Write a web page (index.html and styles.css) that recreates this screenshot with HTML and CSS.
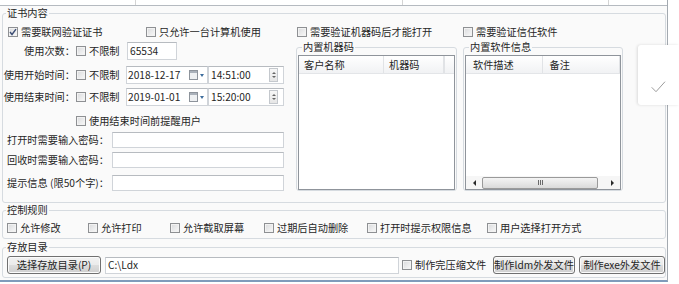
FILE: index.html
```html
<!DOCTYPE html>
<html>
<head>
<meta charset="utf-8">
<link rel="stylesheet" href="styles.css">
</head>
<body>
<div class="window">
  <div class="topbox"><span class="tc c1"></span><span class="tc c2"></span><span class="tc c3"></span><span class="tc c4"></span></div>

  <fieldset class="grp main">
    <legend>证书内容</legend>
    <div class="cols">
      <div class="left">
        <div class="row r1">
          <label class="cb w138"><span class="box on"><svg width="8" height="8" viewBox="0 0 8 8"><polyline points="1,4 3,6.5 7,1.2" fill="none" stroke="#3c4d74" stroke-width="1.4"/></svg></span>需要联网验证证书</label>
          <label class="cb"><span class="box"></span>只允许一台计算机使用</label>
        </div>
        <div class="row r2">
          <span class="lbl">使用次数：</span>
          <label class="cb nolim"><span class="box"></span>不限制</label>
          <span class="input num">65534</span>
        </div>
        <div class="row r3">
          <span class="lbl">使用开始时间：</span>
          <label class="cb nolim"><span class="box"></span>不限制</label>
          <span class="input date"><span>2018-12-17</span><span class="cal"></span><span class="dd"></span></span>
          <span class="input time"><span>14:51:00</span><span class="spin"><i class="up"></i><i class="dn"></i></span></span>
        </div>
        <div class="row r4">
          <span class="lbl">使用结束时间：</span>
          <label class="cb nolim"><span class="box"></span>不限制</label>
          <span class="input date"><span>2019-01-01</span><span class="cal"></span><span class="dd"></span></span>
          <span class="input time"><span>15:20:00</span><span class="spin"><i class="up"></i><i class="dn"></i></span></span>
        </div>
        <div class="row r5">
          <label class="cb"><span class="box"></span>使用结束时间前提醒用户</label>
        </div>
        <div class="row r6">
          <span class="plbl">打开时需要输入密码：</span><span class="input pw"></span>
        </div>
        <div class="row r7">
          <span class="plbl">回收时需要输入密码：</span><span class="input pw"></span>
        </div>
        <div class="row r8">
          <span class="plbl">提示信息 (限50个字)：</span><span class="input pw"></span>
        </div>
      </div>

      <div class="mid">
        <div class="row r1 pl1">
          <label class="cb"><span class="box"></span>需要验证机器码后才能打开</label>
        </div>
        <fieldset class="grp sub">
          <legend>内置机器码</legend>
          <div class="list">
            <div class="lhead"><span class="hc h1">客户名称</span><span class="hc h2">机器码</span><span class="hc"></span></div>
            <div class="lbody"></div>
          </div>
        </fieldset>
      </div>

      <div class="right">
        <div class="row r1">
          <label class="cb"><span class="box"></span>需要验证信任软件</label>
        </div>
        <fieldset class="grp sub">
          <legend>内置软件信息</legend>
          <div class="list">
            <div class="lhead"><span class="hc s1">软件描述</span><span class="hc s2">备注</span></div>
            <div class="lbody"></div>
            <div class="hscroll">
              <span class="sbtn"><i class="al"></i></span>
              <span class="thumb"><i></i><i></i><i></i></span>
              <span class="track"></span>
              <span class="sbtn"><i class="ar"></i></span>
            </div>
          </div>
        </fieldset>
      </div>
    </div>
  </fieldset>

  <fieldset class="grp ctl">
    <legend>控制规则</legend>
    <div class="ctlrow">
      <label class="cb c81"><span class="box"></span>允许修改</label>
      <label class="cb c82"><span class="box"></span>允许打印</label>
      <label class="cb c94"><span class="box"></span>允许截取屏幕</label>
      <label class="cb c103"><span class="box"></span>过期后自动删除</label>
      <label class="cb c120"><span class="box"></span>打开时提示权限信息</label>
      <label class="cb"><span class="box"></span>用户选择打开方式</label>
    </div>
  </fieldset>

  <fieldset class="grp dir">
    <legend>存放目录</legend>
    <div class="dirrow">
      <button class="btn b94">选择存放目录(P)</button>
      <span class="input path">C:\Ldx</span>
      <label class="cb c91"><span class="box"></span>制作完压缩文件</label>
      <button class="btn b82">制作ldm外发文件</button>
      <button class="btn b86">制作exe外发文件</button>
    </div>
  </fieldset>
</div>

<div class="toast">
  <svg width="41" height="60" viewBox="0 0 41 60"><polyline points="13.7,42.3 18,46.7 27,36.7" fill="none" stroke="#9c9c9c" stroke-width="1"/></svg>
</div>
</body>
</html>
```

FILE: styles.css
```css
body {
  margin: 0;
  width: 679px;
  height: 284px;
  overflow: hidden;
  position: relative;
  background: #ffffff;
  font-family: "Noto Sans CJK SC", "Liberation Sans", sans-serif;
  font-size: 10.2px;
  color: #262626;
}

.window {
  width: 668px;
  height: 282px;
  box-sizing: border-box;
  border-right: 1px solid #a3a9b0;
  border-bottom: 2px solid #7f9bbb;
  background: #fafafa;
}

.topbox {
  display: flex;
  height: 6px;
  box-sizing: border-box;
  background: #fff;
  border-bottom: 1px solid #b5bac0;
}
.tc { box-sizing: border-box; height: 5px; border-right: 1px solid #d4d4d4; }
.c1 { width: 136px; }
.c2 { width: 267px; }
.c3 { width: 206px; }
.c4 { flex: 1; border-right: none; }

.grp {
  margin: 0 0 0 2px;
  padding: 0;
  border: 1px solid #d6dbe0;
  border-radius: 3px;
  min-width: 0;
  box-sizing: border-box;
}
.grp > legend {
  padding: 0 1px;
  margin-left: 3px;
  height: 14px;
  line-height: 14px;
}

.main { width: 664px; padding-bottom: 11px; }

.cols { display: flex; }
.left { width: 293px; }
.mid { width: 161px; }
.right { width: 160px; margin-left: 6px; }

.row { display: flex; align-items: center; white-space: nowrap; }
.r1 { height: 14px; margin-top: 5px; }
.r2 { height: 18px; margin-top: 3px; }
.r3 { height: 18px; margin-top: 6px; }
.r4 { height: 18px; margin-top: 4px; }
.r5 { height: 14px; margin-top: 8px; padding-left: 73px; }
.r6 { height: 16px; margin-top: 4px; }
.r7 { height: 16px; margin-top: 4px; }
.r8 { height: 16px; margin-top: 7px; }
.left .r1 { padding-left: 5px; }
.pl1 { padding-left: 1px; }

.cb { display: flex; align-items: center; height: 14px; line-height: 14px; white-space: nowrap; }
.box {
  width: 10px;
  height: 10px;
  box-sizing: border-box;
  border: 1px solid #8e9093;
  background: linear-gradient(135deg, #d9dadc, #f9f9f9);
  box-shadow: inset 0 0 0 1px #f2f2f2;
  margin-right: 3px;
  flex: none;
  display: flex;
  align-items: center;
  justify-content: center;
}
.box.on svg { display: block; }
.w138 { width: 138px; }

.lbl { width: 72px; text-align: right; line-height: 14px; }
.nolim { width: 50px; margin-left: 1px; }
.plbl { width: 105px; padding-left: 4px; line-height: 14px; }

.input {
  background: #fff;
  border: 1px solid #d0d4d9;
  border-top-color: #b7bbc0;
  box-sizing: border-box;
  display: flex;
  align-items: center;
  line-height: 14px;
}
.num { width: 50px; height: 18px; margin-left: 1px; padding-left: 2px; }
.date { width: 82px; height: 18px; padding-left: 1px; padding-right: 3px; }
.time { width: 76px; height: 18px; padding-left: 2px; padding-right: 5px; }
.pw { width: 172px; height: 16px; }

.cal {
  margin-left: auto;
  width: 9px;
  height: 10px;
  box-sizing: border-box;
  border: 1px solid #8d939b;
  background: linear-gradient(#aab1ba 0 2px, #eef0f2 2px);
}
.dd {
  margin-left: 2px;
  width: 0;
  height: 0;
  border-left: 2.5px solid transparent;
  border-right: 2.5px solid transparent;
  border-top: 3px solid #3e6d9d;
}
.spin {
  margin-left: auto;
  width: 9px;
  height: 14px;
  box-sizing: border-box;
  border: 1px solid #c4c8cd;
  background: linear-gradient(#f7f7f7, #e6e6e6);
  display: flex;
  flex-direction: column;
  align-items: center;
  justify-content: space-evenly;
}
.spin i { width: 0; height: 0; border-left: 2px solid transparent; border-right: 2px solid transparent; }
.spin .up { border-bottom: 2px solid #666; }
.spin .dn { border-top: 2px solid #666; }

.sub { width: 100%; margin: 1px 0 0 0; padding: 0 1px; }
.sub > legend { margin-left: 4px; }
.list {
  margin-top: 1px;
  height: 135px;
  box-sizing: border-box;
  border: 1px solid #8f949b;
  background: #fff;
  display: flex;
  flex-direction: column;
}
.lhead {
  height: 18px;
  box-sizing: border-box;
  display: flex;
  background: linear-gradient(#ffffff, #f1f2f4);
  border-bottom: 1px solid #e3e5e8;
  flex: none;
}
.hc { line-height: 17px; box-sizing: border-box; border-right: 1px solid #e1e3e6; white-space: nowrap; }
.h1 { width: 85px; padding-left: 5px; }
.h2 { width: 60px; padding-left: 5px; }
.s1 { width: 77px; padding-left: 7px; }
.s2 { width: 78px; padding-left: 7px; }
.lbody { flex: 1; }

.hscroll {
  height: 13px;
  display: flex;
  align-items: center;
  background: #f6f6f6;
  flex: none;
}
.sbtn { width: 16px; height: 13px; display: flex; align-items: center; justify-content: center; flex: none; }
.al { width: 0; height: 0; border-top: 3px solid transparent; border-bottom: 3px solid transparent; border-right: 3px solid #2a2a2a; }
.ar { width: 0; height: 0; border-top: 3px solid transparent; border-bottom: 3px solid transparent; border-left: 3px solid #2a2a2a; }
.thumb {
  width: 116px;
  height: 12px;
  box-sizing: border-box;
  border: 1px solid #9a9a9a;
  border-radius: 2px;
  background: linear-gradient(#f4f4f4, #dadada);
  display: flex;
  align-items: center;
  justify-content: center;
  gap: 1px;
  flex: none;
}
.thumb i { width: 1px; height: 5px; background: #6a6a6a; }
.track { flex: 1; }

.ctl { width: 664px; padding: 0 0 3px 0; }
.ctlrow { display: flex; align-items: center; height: 14px; margin-top: 4px; padding-left: 4px; }
.c81 { width: 81px; }
.c82 { width: 82px; }
.c94 { width: 94px; }
.c103 { width: 103px; }
.c120 { width: 120px; }

.dir { width: 664px; margin-top: 1px; padding: 0 0 3px 0; }
.dirrow { display: flex; align-items: center; height: 18px; margin-top: 2px; padding-left: 4px; }
.btn {
  height: 18px;
  box-sizing: border-box;
  padding: 0;
  font: inherit;
  color: inherit;
  line-height: 14px;
  border: 1px solid #707070;
  border-radius: 3px;
  background: linear-gradient(#f2f2f2 0%, #ebebeb 50%, #dddddd 51%, #cfcfcf 100%);
  box-shadow: inset 0 0 0 1px #fbfbfb;
  white-space: nowrap;
  flex: none;
}
.b94 { width: 94px; }
.b82 { width: 82px; }
.b86 { width: 86px; margin-left: 4px; }
.path { width: 294px; height: 17px; margin-left: 4px; padding-left: 2px; }
.c91 { width: 91px; margin-left: 3px; }

.toast {
  position: absolute;
  left: 638px;
  top: 45px;
  width: 41px;
  height: 60px;
  background: #fff;
  border-radius: 3px 0 0 3px;
  box-shadow: -1px 0 3px rgba(0, 0, 0, 0.12);
}
.toast svg { display: block; }
```
